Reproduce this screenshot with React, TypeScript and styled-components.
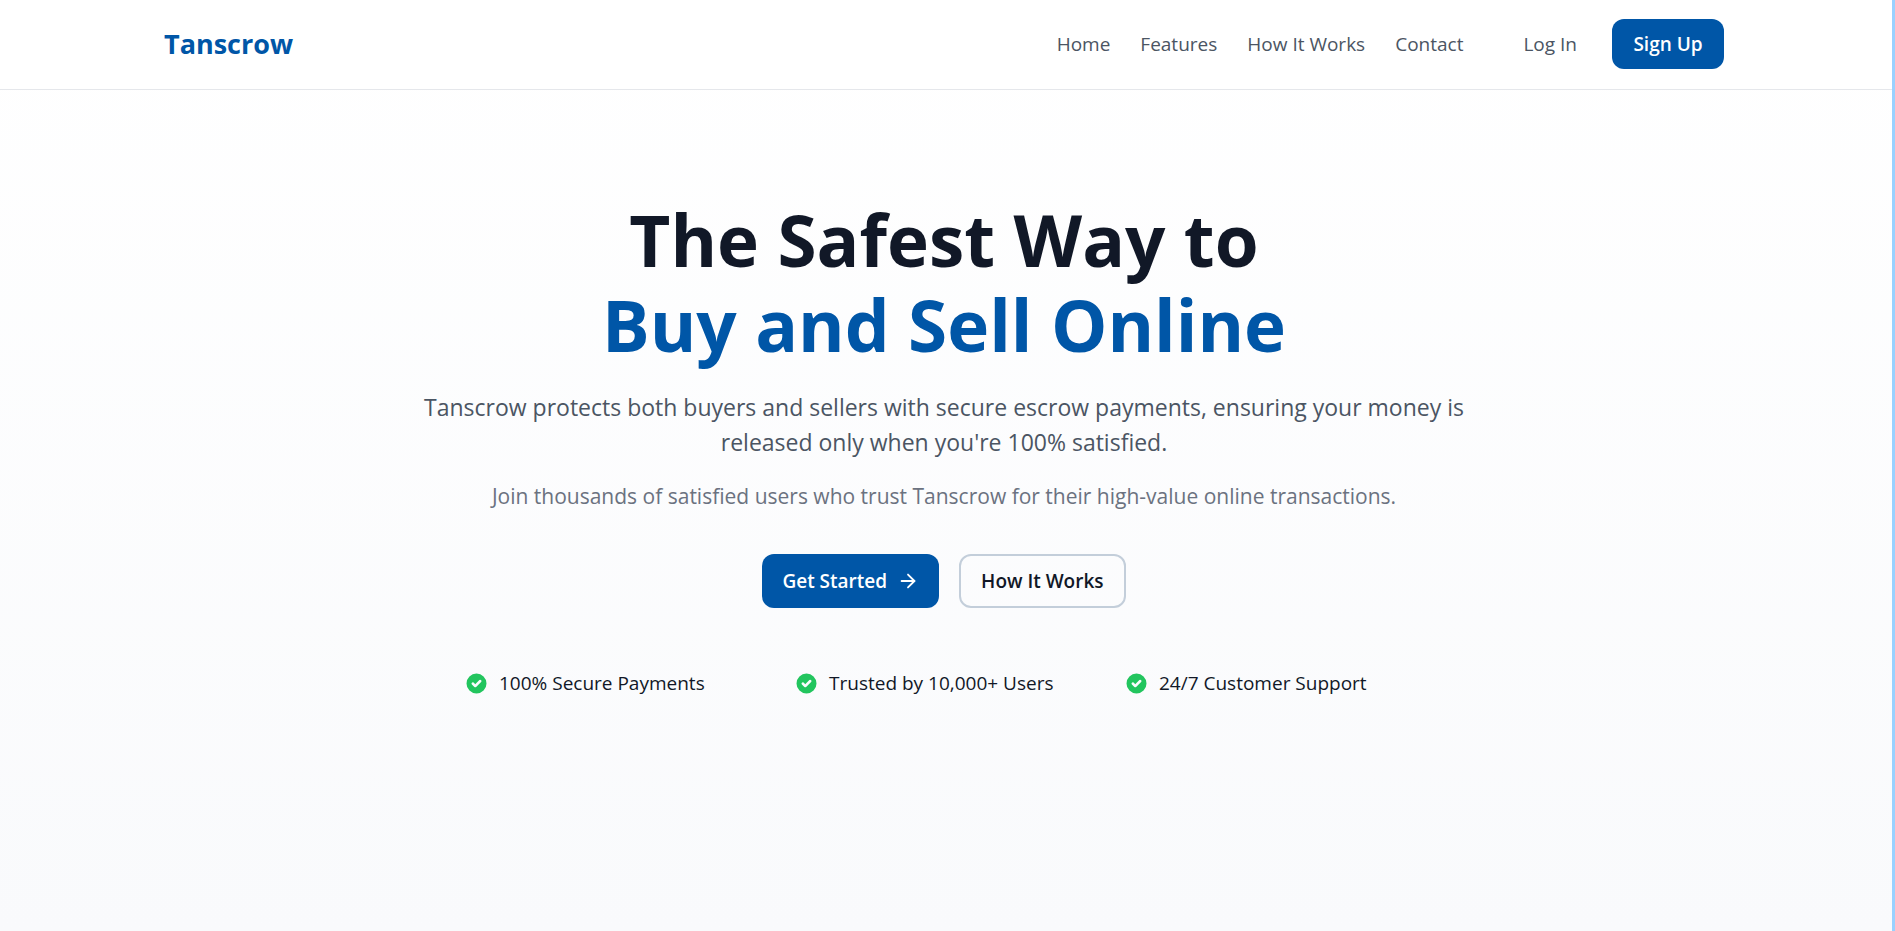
import React from "react";
import styled, { createGlobalStyle, css } from "styled-components";
import { ArrowRight } from "lucide-react";
import { HiCheckCircle } from "react-icons/hi";

const GlobalStyle = createGlobalStyle`
  *, *::before, *::after { box-sizing: border-box; }
  body { margin: 0; background: #fff; }
  #root {
    font-family: "Segoe UI", "Open Sans", "Noto Sans", sans-serif;
    color: #111827;
  }
  h1, p, ul { margin: 0; padding: 0; }
  a { color: inherit; text-decoration: none; }
  button { font-family: inherit; cursor: pointer; }
`;

const Page = styled.div`
  min-height: 100vh;
  display: flex;
  flex-direction: column;
  padding-right: 4px;
  border-right: 3px solid #99d1ff;
  background: linear-gradient(to bottom, #ffffff, #f9fafc);
`;

const Header = styled.header`
  background: #fff;
  border-bottom: 1px solid #e5e7eb;
  margin-right: -4px;
  padding-right: 4px;
`;

const HeaderInner = styled.div`
  max-width: 1600px;
  margin: 0 auto;
  padding: 19px 20px 20px;
  display: flex;
  align-items: center;
  justify-content: space-between;
`;

const Brand = styled.a`
  && { color: #0056a7; }
  font-size: 27px;
  line-height: 40px;
  font-weight: 700;
`;

const HeaderRight = styled.div`
  display: flex;
  align-items: center;
  gap: 60px;
`;

const Nav = styled.nav`
  display: flex;
  gap: 30px;
`;

const Account = styled.div`
  display: flex;
  align-items: center;
  gap: 35px;
`;

const NavLink = styled.a`
  && { color: #4b5563; }
  font-size: 19px;
  line-height: 30px;
`;

const Button = styled.button<{ $outline?: boolean; $tall?: boolean }>`
  display: flex;
  align-items: center;
  justify-content: center;
  gap: 10px;
  min-width: 112px;
  height: ${(p) => (p.$tall ? 54 : 50)}px;
  padding: 0 20px;
  border: 0;
  border-radius: 12px;
  background: #0056a7;
  color: #fff;
  font-size: 19px;
  line-height: 30px;
  font-weight: 600;
  ${(p) =>
    p.$outline &&
    css`
      border: 2px solid #c3ceda;
      background: transparent;
      color: #111827;
    `}
`;

const Hero = styled.main`
  flex: 1;
  display: flex;
  flex-direction: column;
  align-items: center;
  padding: 107px 20px;
  text-align: center;
`;

const Title = styled.h1`
  font-size: 71px;
  line-height: 85px;
  font-weight: 700;
  color: #111827;
`;

const Accent = styled.span`
  display: block;
  color: #0056a7;
`;

const Lead = styled.p`
  max-width: 1080px;
  && { margin-top: 23px; }
  font-size: 23px;
  line-height: 35px;
  color: #4b5563;
`;

const Note = styled.p`
  && { margin-top: 19px; }
  font-size: 21px;
  line-height: 35px;
  color: #6b7280;
`;

const Actions = styled.div`
  display: flex;
  gap: 20px;
  margin-top: 40px;
`;

const Benefits = styled.ul`
  width: 100%;
  max-width: 960px;
  && { margin-top: 60px; }
  display: grid;
  grid-template-columns: repeat(3, 1fr);
  gap: 30px;
  list-style: none;
`;

const Benefit = styled.li`
  display: flex;
  align-items: center;
  gap: 10px;
  white-space: nowrap;
  font-size: 19px;
  line-height: 30px;

  svg { flex: none; color: #22c55e; }
`;

const links = ["Home", "Features", "How It Works", "Contact"];
const benefits = ["100% Secure Payments", "Trusted by 10,000+ Users", "24/7 Customer Support"];

export default function App() {
  return (
    <Page>
      <GlobalStyle />
      <Header>
        <HeaderInner>
          <Brand href="#">Tanscrow</Brand>
          <HeaderRight>
            <Nav>
              {links.map((label) => (
                <NavLink key={label} href="#">{label}</NavLink>
              ))}
            </Nav>
            <Account>
              <NavLink href="#">Log In</NavLink>
              <Button type="button">Sign Up</Button>
            </Account>
          </HeaderRight>
        </HeaderInner>
      </Header>
      <Hero>
        <Title>
          The Safest Way to <Accent>Buy and Sell Online</Accent>
        </Title>
        <Lead>
          Tanscrow protects both buyers and sellers with secure escrow payments, ensuring your money is
          released only when you're 100% satisfied.
        </Lead>
        <Note>Join thousands of satisfied users who trust Tanscrow for their high-value online transactions.</Note>
        <Actions>
          <Button type="button" $tall>
            Get Started <ArrowRight size={22} strokeWidth={2} />
          </Button>
          <Button type="button" $tall $outline>How It Works</Button>
        </Actions>
        <Benefits>
          {benefits.map((label) => (
            <Benefit key={label}>
              <HiCheckCircle size={25} />
              {label}
            </Benefit>
          ))}
        </Benefits>
      </Hero>
    </Page>
  );
}
